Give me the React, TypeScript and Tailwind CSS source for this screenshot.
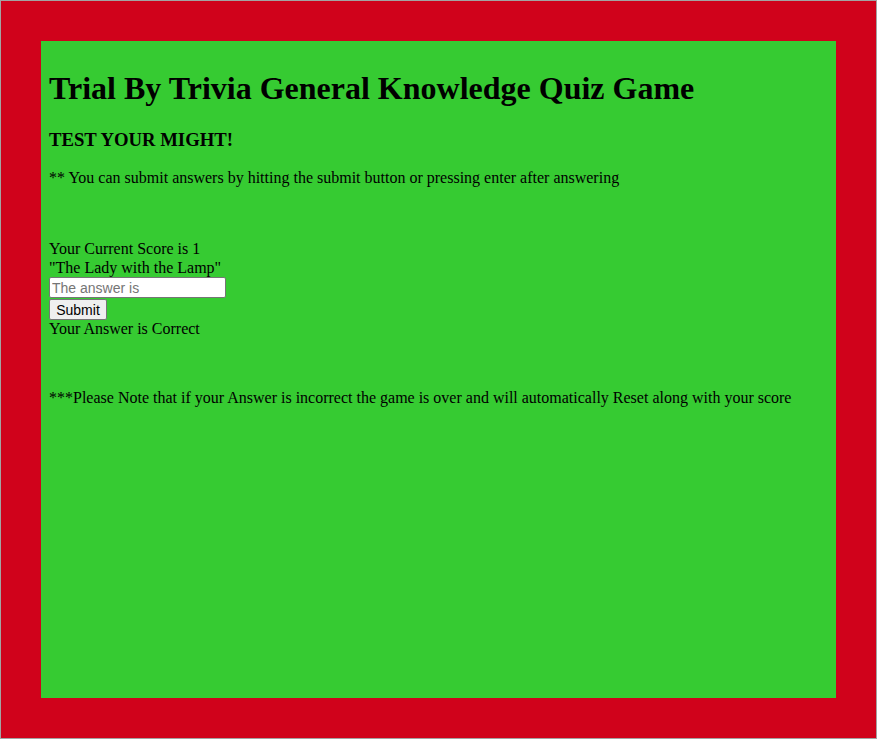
const App = () => {
  return (
    <div className="h-[739px] w-[877px] border border-[#a3a3a3] bg-[#d0021b] p-[40px] font-['Liberation_Serif',serif] text-black">
      <div className="h-full bg-[#36cb32] p-2">
        <h1 className="my-[21.44px] text-[32px] font-bold leading-[37px]">
          Trial By Trivia General Knowledge Quiz Game
        </h1>
        <h3 className="my-[18.72px] text-[18.72px] font-bold leading-[21.5px]">
          TEST YOUR MIGHT!
        </h3>
        <p className="my-4 text-base leading-[18.4px]">
          ** You can submit answers by hitting the submit button or pressing enter after answering
        </p>
        <div className="text-base leading-[18.4px]">
          <br />
          <br />
          <div>Your Current Score is 1</div>
          <div>"The Lady with the Lamp"</div>
          <form onSubmit={(e) => e.preventDefault()}>
            <input
              type="text"
              placeholder="The answer is"
              className="block h-[21px] w-[177px] rounded-[2px] border border-[#767676] bg-white px-[2px] py-[1px] font-['Liberation_Sans',Arial,sans-serif] text-[14px] placeholder:text-[#757575]"
            />
            <button
              type="submit"
              className="mt-[1px] block h-[21px] w-[58px] rounded-[2px] border border-[#767676] bg-[#efefef] px-[6px] font-['Liberation_Sans',Arial,sans-serif] text-[14px] leading-[16px]"
            >
              Submit
            </button>
          </form>
          <div>Your Answer is Correct</div>
        </div>
        <p className="my-4 text-base leading-[18.4px]">&nbsp;</p>
        <p className="my-4 text-base leading-[18.4px]">
          ***Please Note that if your Answer is incorrect the game is over and will automatically Reset along with your score
        </p>
      </div>
    </div>
  );
};

export default App;
